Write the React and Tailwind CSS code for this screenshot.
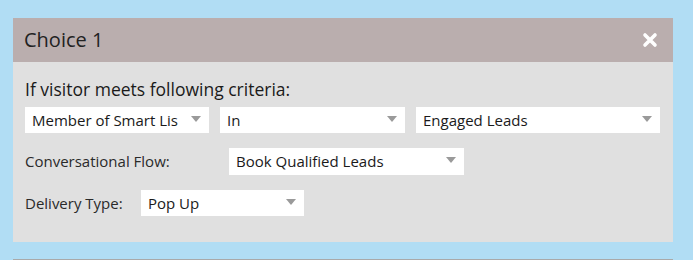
import React from 'react';

const Arrow = () => (
  <svg width="10" height="6" viewBox="0 0 10 6" className="shrink-0 -mt-[3px]">
    <path d="M0 0 L10 0 L5 6 Z" fill="#9a9a9a" />
  </svg>
);

function Select({ value, className }) {
  return (
    <div className={`flex items-center justify-between bg-white pl-[7px] pr-[8px] text-[15px] text-[#1a1a1a] ${className}`}>
      <span className="whitespace-nowrap overflow-hidden">{value}</span>
      <Arrow />
    </div>
  );
}

export default function App() {
  return (
    <div className="h-[260px] w-[693px] overflow-hidden bg-[#b1ddf4] pt-[18px]" style={{ fontFamily: '"Open Sans", sans-serif' }}>
      <div className="ml-[13px] w-[660px]">
        <div className="flex h-[44px] items-center justify-between bg-[#baaeae] pl-[11px] pr-[15px]">
          <span className="text-[20px] text-[#222]">Choice 1</span>
          <svg width="16" height="16" viewBox="0 0 16 16">
            <path d="M3 3 L13 13 M13 3 L3 13" stroke="#fff" strokeWidth="3.6" strokeLinecap="round" />
          </svg>
        </div>
        <div className="h-[180px] bg-[#e0e0e0] pl-[12px] pt-[16px]">
          <div className="h-[22px] text-[17.5px] leading-[22px] text-[#1a1a1a]">If visitor meets following criteria:</div>
          <div className="mt-[7px] flex gap-[11px]">
            <Select value="Member of Smart Lis" className="h-[26px] w-[184px]" />
            <Select value="In" className="h-[26px] w-[185px]" />
            <Select value="Engaged Leads" className="h-[26px] w-[244px]" />
          </div>
          <div className="mt-[15px] flex items-center">
            <span className="w-[204px] text-[15px] text-[#2a2a2a]">Conversational Flow:</span>
            <Select value="Book Qualified Leads" className="h-[27px] w-[235px]" />
          </div>
          <div className="mt-[15px] flex items-center">
            <span className="w-[116px] text-[15px] text-[#2a2a2a]">Delivery Type:</span>
            <Select value="Pop Up" className="h-[26px] w-[163px]" />
          </div>
        </div>
      </div>
      <div className="ml-[13px] mt-[17px] h-[1px] w-[660px] bg-[#a9a9a9]" />
    </div>
  );
}
